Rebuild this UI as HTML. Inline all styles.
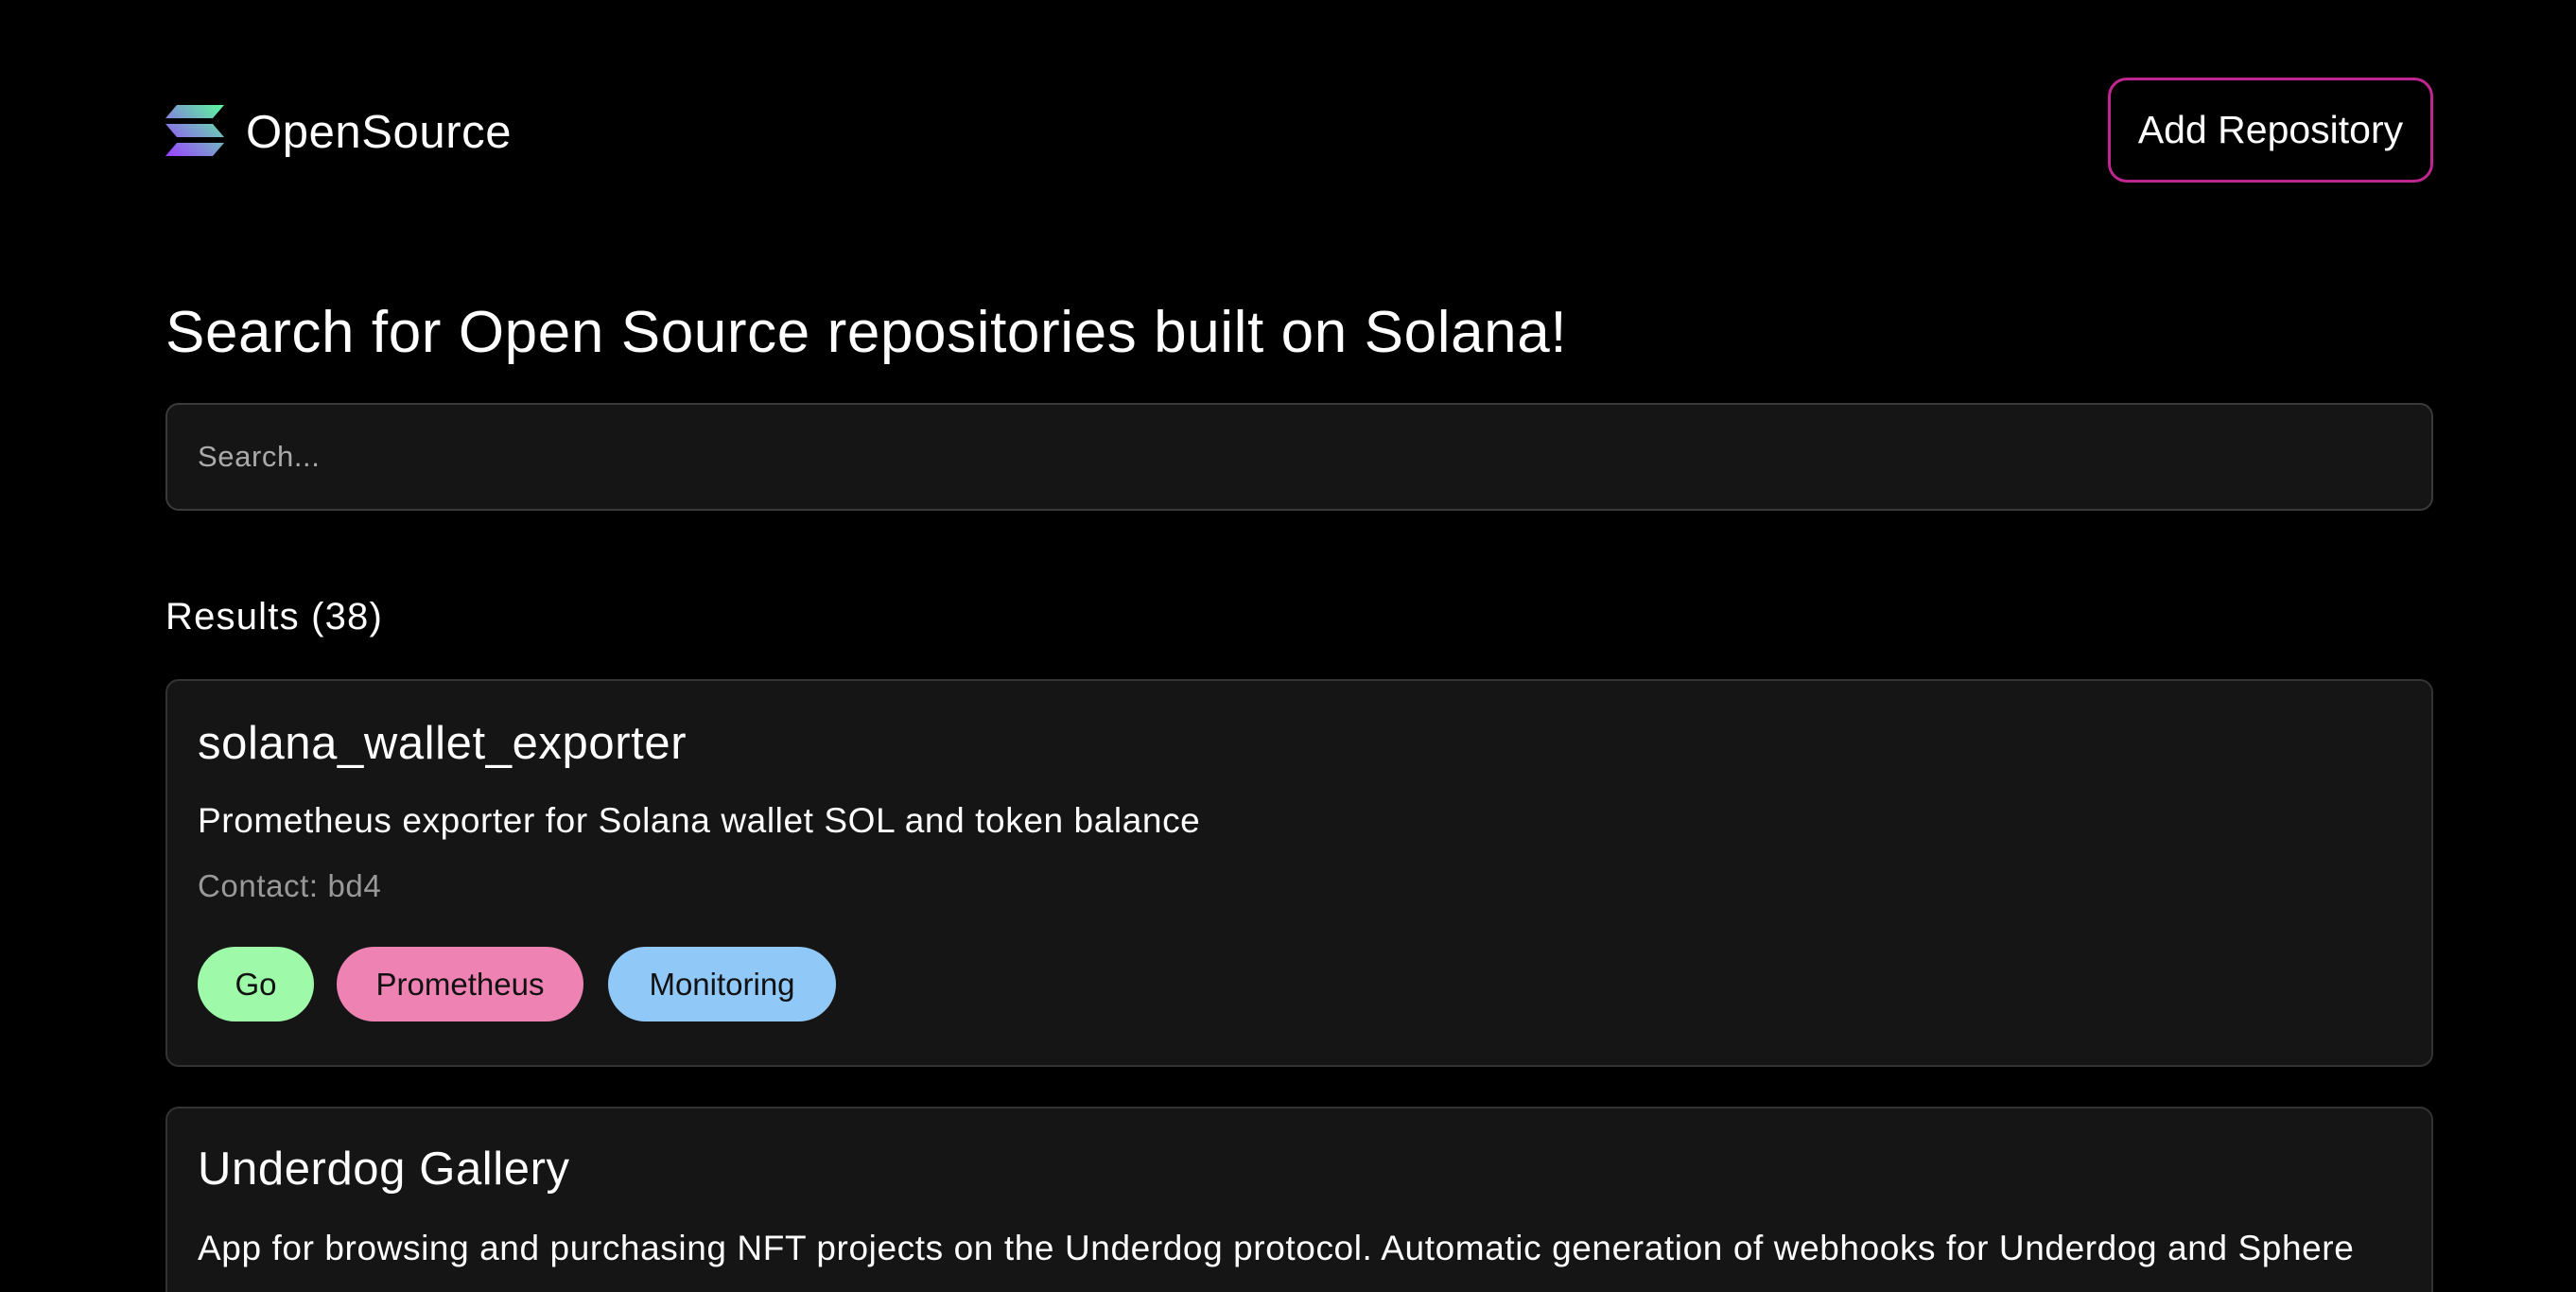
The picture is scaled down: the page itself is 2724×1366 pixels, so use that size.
<!DOCTYPE html>
<html><head><meta charset="utf-8"><style>
*{box-sizing:border-box;margin:0;padding:0}
html,body{width:2724px;height:1366px;background:#000;overflow:hidden;font-family:"Liberation Sans",sans-serif;color:#fff}
#w{position:relative;width:2724px;height:1366px;overflow:hidden}
.abs{position:absolute;white-space:nowrap;letter-spacing:0.6px}
.btn{position:absolute;left:2229px;top:82px;width:344px;height:111px;border:3px solid #c0268f;border-radius:20px;display:flex;align-items:center;justify-content:center;font-size:41px}
.search{position:absolute;left:175px;top:426px;width:2398px;height:114px;background:#151515;border:2px solid #3a3a3a;border-radius:14px}
.card{position:absolute;left:175px;width:2398px;background:#151515;border:2px solid #333;border-radius:14px}
.tag{position:absolute;top:1001px;height:79px;border-radius:40px;color:#111;font-size:33px;display:flex;align-items:center;justify-content:center}
</style></head><body><div id="w">
<svg class="abs" style="left:175px;top:111px" width="62" height="55" viewBox="0 0 62 55">
<defs><linearGradient id="g" gradientUnits="userSpaceOnUse" x1="5" y1="55" x2="55" y2="0"><stop offset="0" stop-color="#9945ff"/><stop offset="1" stop-color="#5ef0a0"/></linearGradient></defs>
<path d="M12 0H62L50 14H0Z" fill="url(#g)"/>
<path d="M0 20H50L62 34H12Z" fill="url(#g)"/>
<path d="M12 40H62L50 54H0Z" fill="url(#g)"/>
</svg>
<div class="abs" style="left:260px;top:110px;font-size:49px;line-height:60px">OpenSource</div>
<div class="btn">Add Repository</div>
<div class="abs" style="left:175px;top:314px;font-size:62px;line-height:76px">Search for Open Source repositories built on Solana!</div>
<div class="search"><div class="abs" style="left:32px;top:37px;font-size:31px;color:#aaa">Search...</div></div>
<div class="abs" style="left:175px;top:628px;font-size:40px;line-height:48px;letter-spacing:1.2px">Results (38)</div>
<div class="card" style="top:718px;height:410px"></div>
<div class="abs" style="left:209px;top:757px;font-size:49px;line-height:58px">solana_wallet_exporter</div>
<div class="abs" style="left:209px;top:846px;font-size:37px;line-height:44px">Prometheus exporter for Solana wallet SOL and token balance</div>
<div class="abs" style="left:209px;top:917px;font-size:33px;line-height:40px;color:#999">Contact: bd4</div>
<div class="tag" style="left:209px;width:123px;background:#9efaa8">Go</div>
<div class="tag" style="left:356px;width:261px;background:#ee82b3">Prometheus</div>
<div class="tag" style="left:643px;width:241px;background:#90c8f8">Monitoring</div>
<div class="card" style="top:1170px;height:260px"></div>
<div class="abs" style="left:209px;top:1207px;font-size:49px;line-height:58px">Underdog Gallery</div>
<div class="abs" style="left:209px;top:1298px;font-size:37px;line-height:44px">App for browsing and purchasing NFT projects on the Underdog protocol. Automatic generation of webhooks for Underdog and Sphere</div>
</div></body></html>
